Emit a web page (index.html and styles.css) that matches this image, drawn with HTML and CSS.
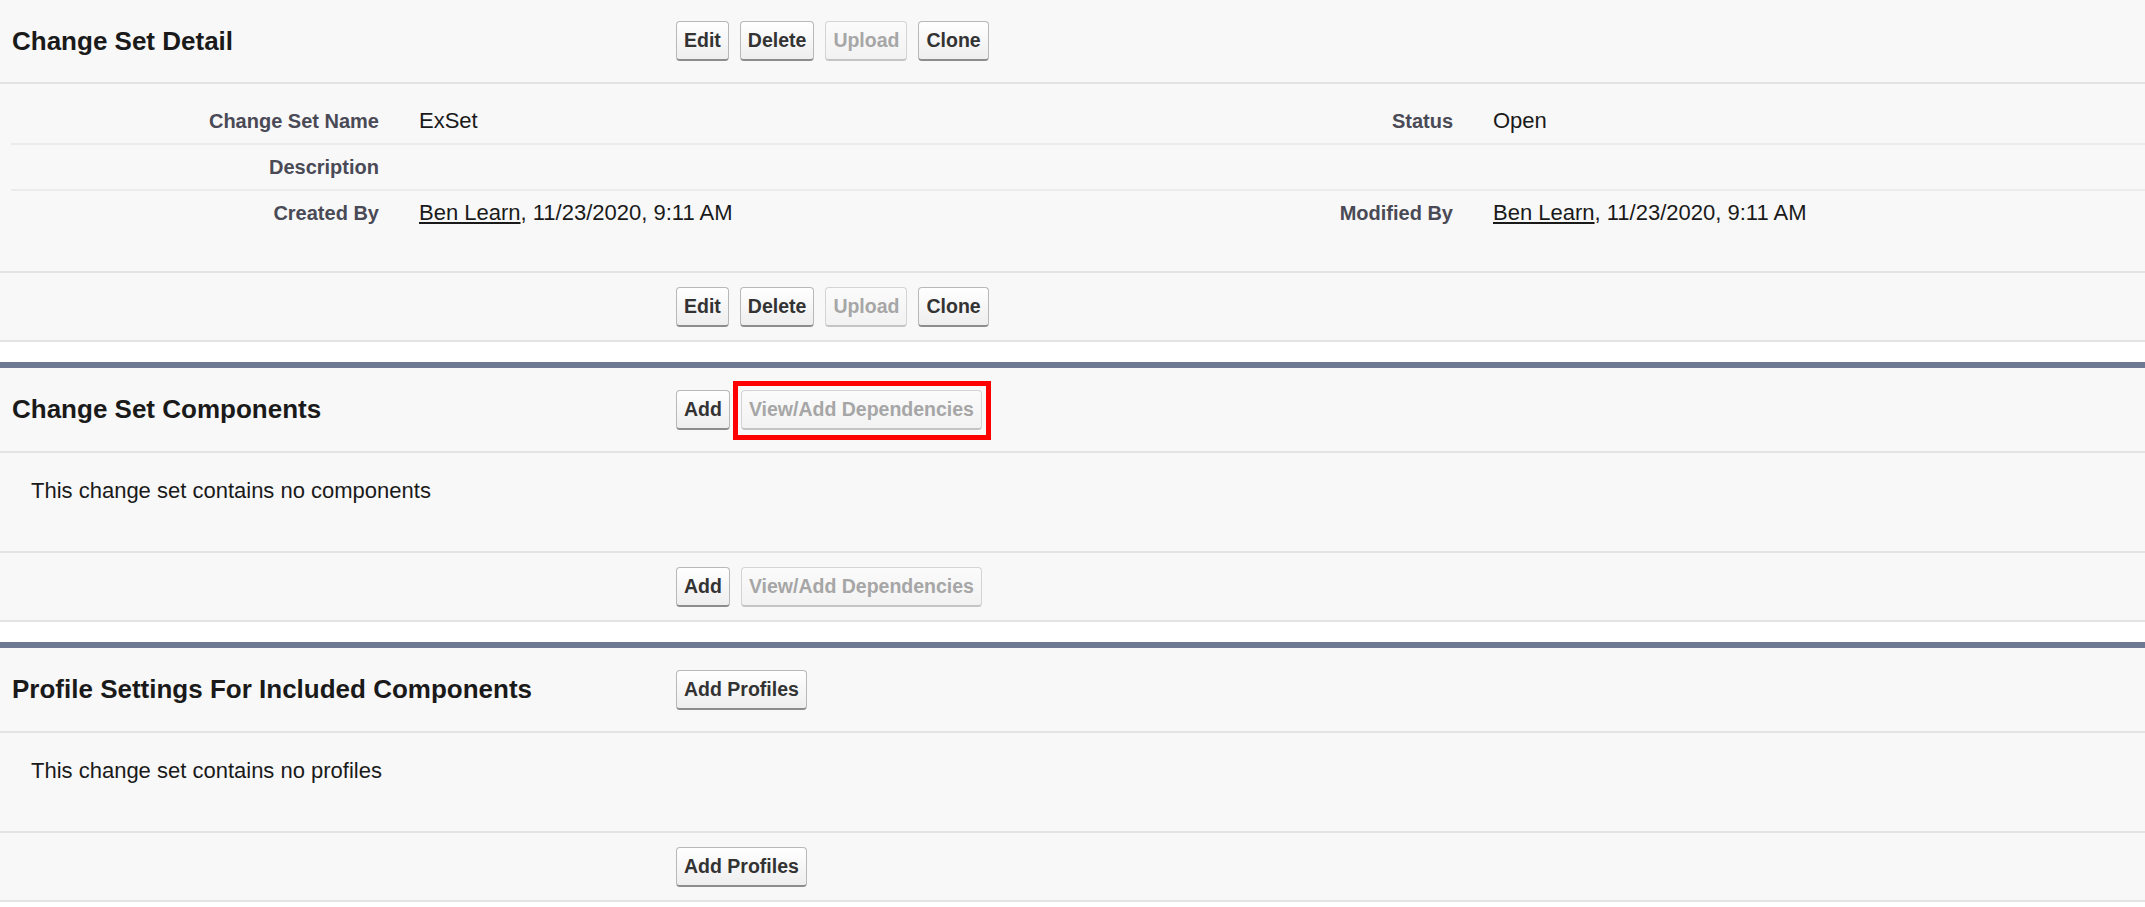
FILE: index.html
```html
<!DOCTYPE html>
<html lang="en">
<head>
<meta charset="utf-8">
<title>Change Set Detail</title>
<link rel="stylesheet" href="styles.css">
</head>
<body>
<div class="page">

  <section class="block block--first">
    <div class="block-head block-head--top">
      <h2 class="block-title">Change Set Detail</h2>
      <div class="btns">
        <button class="btn" type="button">Edit</button>
        <button class="btn" type="button">Delete</button>
        <button class="btn btn--disabled" type="button">Upload</button>
        <button class="btn" type="button">Clone</button>
      </div>
    </div>
    <div class="detail">
      <div class="detail-row">
        <div class="label">Change Set Name</div>
        <div class="data">ExSet</div>
        <div class="label">Status</div>
        <div class="data">Open</div>
      </div>
      <div class="detail-row">
        <div class="label">Description</div>
        <div class="data"></div>
        <div class="label"></div>
        <div class="data"></div>
      </div>
      <div class="detail-row detail-row--last">
        <div class="label">Created By</div>
        <div class="data"><a class="link" href="#">Ben Learn</a>, 11/23/2020, 9:11 AM</div>
        <div class="label">Modified By</div>
        <div class="data"><a class="link" href="#">Ben Learn</a>, 11/23/2020, 9:11 AM</div>
      </div>
    </div>
    <div class="block-foot">
      <div class="btns">
        <button class="btn" type="button">Edit</button>
        <button class="btn" type="button">Delete</button>
        <button class="btn btn--disabled" type="button">Upload</button>
        <button class="btn" type="button">Clone</button>
      </div>
    </div>
  </section>

  <section class="block">
    <div class="block-head">
      <h2 class="block-title">Change Set Components</h2>
      <div class="btns">
        <button class="btn" type="button">Add</button>
        <span class="marked">
          <button class="btn btn--disabled" type="button">View/Add Dependencies</button>
          <span class="marker"></span>
        </span>
      </div>
    </div>
    <div class="message">This change set contains no components</div>
    <div class="block-foot">
      <div class="btns">
        <button class="btn" type="button">Add</button>
        <button class="btn btn--disabled" type="button">View/Add Dependencies</button>
      </div>
    </div>
  </section>

  <section class="block">
    <div class="block-head">
      <h2 class="block-title">Profile Settings For Included Components</h2>
      <div class="btns">
        <button class="btn" type="button">Add Profiles</button>
      </div>
    </div>
    <div class="message">This change set contains no profiles</div>
    <div class="block-foot">
      <div class="btns">
        <button class="btn" type="button">Add Profiles</button>
      </div>
    </div>
  </section>

</div>
</body>
</html>
```

FILE: styles.css
```css
html, body {
  margin: 0;
  padding: 0;
  background: #ffffff;
}

body {
  font-family: "Liberation Sans", Arial, sans-serif;
  color: #1a1a1a;
}

.page {
  display: flex;
  flex-direction: column;
}

.block {
  background: #f8f8f8;
  border-top: 6px solid #6e7a94;
  border-bottom: 2px solid #e3e3e3;
  margin-bottom: 20px;
}

.block--first {
  border-top: 0;
}

.block-head {
  display: flex;
  align-items: center;
  height: 83px;
  border-bottom: 2px solid #e3e3e3;
}

.block-head--top {
  height: 82px;
}

.block-title {
  margin: 0;
  width: 664px;
  padding-left: 12px;
  font-size: 26px;
  font-weight: bold;
  color: #1a1a1a;
  white-space: nowrap;
}

.btns {
  display: flex;
  align-items: center;
  gap: 11px;
}

.btn {
  box-sizing: border-box;
  height: 40px;
  padding: 0 7px;
  margin: 0;
  font-family: "Liberation Sans", Arial, sans-serif;
  font-size: 19.5px;
  font-weight: bold;
  color: #333333;
  background: linear-gradient(#ffffff, #eeeeee);
  border: 1px solid #b8b8b8;
  border-bottom: 2px solid #8c8c8c;
  border-radius: 4px;
  cursor: pointer;
}

.btn--disabled {
  color: #a6a6a6;
  border-color: #d4d4d4;
  border-bottom-color: #c4c4c4;
  background: linear-gradient(#fbfbfb, #f2f2f2);
  cursor: default;
}

.marked {
  position: relative;
  display: inline-flex;
}

.marker {
  position: absolute;
  top: -9px;
  left: -8px;
  right: -9px;
  bottom: -10px;
  border: 5px solid #ff0000;
  pointer-events: none;
}

.detail {
  margin: 15px 0 36px 11px;
  display: flex;
  flex-direction: column;
}

.detail-row {
  display: grid;
  grid-template-columns: 388px 686px 388px 1fr;
  align-items: center;
  border-bottom: 2px solid #ebebeb;
}

.detail-row--last {
  border-bottom: 0;
}

.label {
  box-sizing: border-box;
  padding: 9px 20px;
  line-height: 26px;
  min-height: 44px;
  text-align: right;
  font-size: 20px;
  font-weight: bold;
  color: #4a4a56;
}

.data {
  box-sizing: border-box;
  padding: 9px 20px;
  line-height: 26px;
  min-height: 44px;
  font-size: 22px;
  color: #1a1a1a;
}

.link {
  color: #1a1a1a;
  text-decoration: underline;
}

.message {
  padding: 25px 31px 47px;
  line-height: 26px;
  font-size: 22px;
  color: #1a1a1a;
}

.block-foot {
  border-top: 2px solid #e3e3e3;
  padding: 14px 0 13px 676px;
}
```
